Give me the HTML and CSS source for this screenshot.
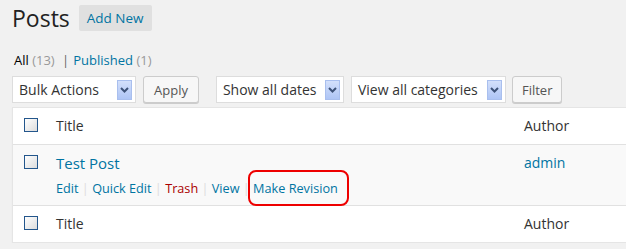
FILE: index.html
```html
<!DOCTYPE html>
<html lang="en">
<head>
    <meta charset="UTF-8">
    <title>Posts</title>
    <link rel="stylesheet" href="styles.css">
</head>
<body>
    <div class="wrap">
        <h2 class="page-title">Posts <a class="add-new" href="#">Add New</a></h2>

        <ul class="subsubsub">
            <li><a class="current" href="#">All <span class="count">(13)</span></a> <span class="sep">|</span></li>
            <li><a href="#">Published <span class="count">(1)</span></a></li>
        </ul>

        <div class="tablenav">
            <div class="select bulk">Bulk Actions <span class="arrow"><svg width="9" height="6" viewBox="0 0 9 6"><path d="M1 1 L4.5 4.5 L8 1" fill="none" stroke="#3d5278" stroke-width="2"/></svg></span></div>
            <button class="button">Apply</button>
            <div class="select dates">Show all dates <span class="arrow"><svg width="9" height="6" viewBox="0 0 9 6"><path d="M1 1 L4.5 4.5 L8 1" fill="none" stroke="#3d5278" stroke-width="2"/></svg></span></div>
            <div class="select cats">View all categories <span class="arrow"><svg width="9" height="6" viewBox="0 0 9 6"><path d="M1 1 L4.5 4.5 L8 1" fill="none" stroke="#3d5278" stroke-width="2"/></svg></span></div>
            <button class="button filter">Filter</button>
        </div>

        <div class="posts-table">
            <div class="row head">
                <div class="cb"><span class="checkbox"></span></div>
                <div class="col-title">Title</div>
                <div class="col-author">Author</div>
            </div>
            <div class="row alt">
                <div class="cb"><span class="checkbox"></span></div>
                <div class="col-title">
                    <a class="row-title" href="#">Test Post</a>
                    <div class="row-actions"><a href="#">Edit</a> <span class="sep">|</span> <a href="#">Quick Edit</a> <span class="sep">|</span> <a class="trash" href="#">Trash</a> <span class="sep">|</span> <a href="#">View</a> <span class="sep">|</span> <a class="highlight" href="#">Make Revision</a></div>
                </div>
                <div class="col-author"><a href="#">admin</a></div>
            </div>
            <div class="row foot">
                <div class="cb"><span class="checkbox"></span></div>
                <div class="col-title">Title</div>
                <div class="col-author">Author</div>
            </div>
        </div>
    </div>
</body>
</html>
```

FILE: styles.css
```css
/* admin posts list */
body {
    margin: 0;
    background-color: #f1f1f1;
    font-family: "Open Sans", "Liberation Sans", sans-serif;
    color: #444;
    overflow: hidden;
}

a {
    color: #0074a2;
    text-decoration: none;
}

.wrap {
    padding: 5px 0 0 12px;
    width: 640px;
}

.page-title {
    margin: 0;
    display: flex;
    align-items: center;
    height: 26px;
    font-size: 23px;
    font-weight: 400;
    line-height: 26px;
    color: #222;
}

.add-new {
    margin-left: 9px;
    padding: 0 8px;
    height: 26px;
    line-height: 26px;
    font-size: 13.5px;
    background-color: #e0e0e0;
    border-radius: 2px;
}

.subsubsub {
    list-style: none;
    margin: 20px 0 0 2px;
    padding: 0;
    display: flex;
    font-size: 13px;
    line-height: 18px;
}

.subsubsub li {
    white-space: pre;
}

.subsubsub .current {
    color: #000;
}

.subsubsub .count {
    color: #999;
}

.subsubsub .sep {
    color: #666;
    padding: 0 4px;
}

.tablenav {
    display: flex;
    margin-top: 7px;
    height: 27px;
}

.select {
    display: flex;
    align-items: center;
    justify-content: space-between;
    box-sizing: border-box;
    height: 27px;
    padding: 0 3px 0 6px;
    background-color: #fff;
    border: 1px solid #ddd;
    font-size: 14px;
    color: #333;
}

.select.bulk { width: 124px; }
.select.dates { width: 128px; margin-left: 17px; }
.select.cats { width: 155px; margin-left: 7px; }

.arrow {
    display: flex;
    align-items: center;
    justify-content: center;
    width: 15px;
    height: 20px;
    box-sizing: border-box;
    background: linear-gradient(#d3e0fb, #aec5f5);
    border: 1px solid #a9bfee;
}

.button {
    margin-left: 7px;
    height: 27px;
    padding: 0 10px;
    font-family: inherit;
    font-size: 13px;
    color: #555;
    background-color: #f7f7f7;
    border: 1px solid #ccc;
    border-radius: 3px;
    box-shadow: 0 1px 0 #ccc;
}

.button.filter {
    margin-left: 6px;
    padding: 0 9px;
}

.posts-table {
    margin-top: 4px;
    background-color: #fff;
    border: 1px solid #e5e5e5;
    box-shadow: 0 1px 1px rgba(0, 0, 0, 0.06);
}

.row {
    display: grid;
    grid-template-columns: 43px 468px 1fr;
    padding: 8px 0;
    font-size: 14px;
    line-height: 20px;
    color: #333;
}

.row.head {
    border-bottom: 1px solid #e1e1e1;
}

.row.alt {
    background-color: #f9f9f9;
    padding-bottom: 7px;
    border-bottom: 1px solid #e1e1e1;
}

.cb {
    padding: 2px 0 0 11px;
}

.checkbox {
    display: block;
    width: 14px;
    height: 14px;
    box-sizing: border-box;
    border: 1px solid #23568c;
    background: linear-gradient(135deg, #ffffff, #dcdcdc);
}

.row-title {
    font-size: 15px;
}

.row-actions {
    margin-top: 4px;
    font-size: 12.7px;
    white-space: nowrap;
}

.row-actions .sep {
    color: #ddd;
}

.row-actions .trash {
    color: #a00;
}

.highlight {
    position: relative;
}

.highlight::after {
    content: "";
    position: absolute;
    top: -9px;
    bottom: -9px;
    left: -5px;
    right: -11px;
    border: 2px solid #e00;
    border-radius: 8px;
}
```
